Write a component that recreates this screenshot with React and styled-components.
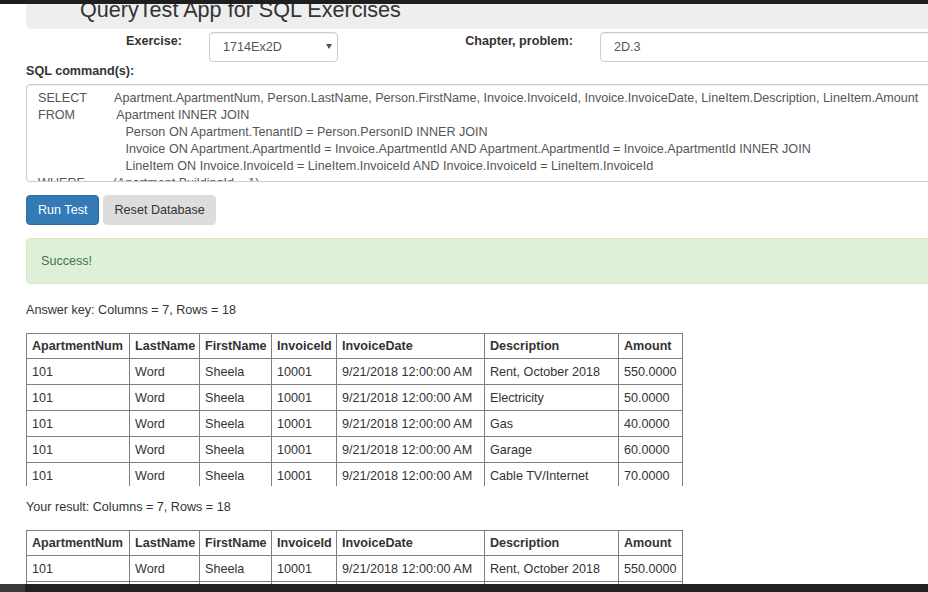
import React from 'react'
import styled, { createGlobalStyle } from 'styled-components'

const GlobalStyle = createGlobalStyle`
html, body {
    margin: 0;
    overflow: hidden;
    background: #fff;
}
body {
    font-family: "Liberation Sans", Arial, sans-serif;
    font-size: 12.6px;
    line-height: 18px;
    color: #333;
}
`

const TopBar = styled.div`
position: fixed;
top: 0;
left: 0;
right: 0;
height: 4px;
background: #1e1e1e;
z-index: 10;
`

const BottomBar = styled.div`
position: fixed;
bottom: 0;
left: 0;
right: 0;
height: 8px;
display: flex;
background: #222;
z-index: 10;
`

const BarCorner = styled.div`
width: 25px;
background: #3a3a3a;
`

const Page = styled.div`
width: 1150px;
padding-left: 26px;
`

const Jumbotron = styled.div`
height: 29px;
box-sizing: border-box;
display: flex;
align-items: flex-end;
padding: 0 0 7px 54px;
background: #eee;
border-radius: 6px;
`

const Title = styled.h3`
margin: 0;
font-size: 21.6px;
font-weight: normal;
line-height: 1.1;
color: #333;
`

const FormRow = styled.div`
display: flex;
align-items: flex-start;
margin-top: 3px;
`

const FieldLabel = styled.label`
width: ${p => p.$w}px;
flex: none;
margin-right: 27px;
text-align: right;
font-weight: bold;
line-height: 18px;
`

const SelectWrap = styled.div`
position: relative;
width: 129px;
flex: none;
`

const Select = styled.select`
width: 100%;
height: 30px;
box-sizing: border-box;
padding: 0 13px;
appearance: none;
border: 1px solid #ccc;
border-radius: 4px;
background: #fff;
font: inherit;
color: #555;
box-shadow: inset 0 1px 1px rgba(0, 0, 0, .075);
`

const Caret = styled.span`
position: absolute;
right: 6px;
top: 12px;
width: 0;
height: 0;
border-left: 3.5px solid transparent;
border-right: 3.5px solid transparent;
border-top: 5px solid #555;
pointer-events: none;
`

const TextInput = styled.input`
flex: 1;
height: 30px;
box-sizing: border-box;
padding: 0 13px;
border: 1px solid #ccc;
border-radius: 4px;
font: inherit;
color: #555;
box-shadow: inset 0 1px 1px rgba(0, 0, 0, .075);
`

const BlockLabel = styled.div`
font-weight: bold;
line-height: 18px;
`

const SqlBox = styled.textarea`
display: block;
width: 100%;
height: 98px;
box-sizing: border-box;
margin-top: 4px;
padding: 5px 11px;
border: 1px solid #ccc;
border-radius: 4px;
font: inherit;
line-height: 17px;
color: #555;
white-space: pre;
overflow: hidden;
resize: none;
box-shadow: inset 0 1px 1px rgba(0, 0, 0, .075);
`

const Buttons = styled.div`
display: flex;
gap: 4px;
margin-top: 13px;
`

const Button = styled.button`
height: 30px;
padding: 0 ${p => p.$primary ? 11 : 10}px;
border: 1px solid ${p => p.$primary ? '#2e6da4' : '#ddd'};
border-radius: 4px;
background: ${p => p.$primary ? '#337ab7' : '#ddd'};
color: ${p => p.$primary ? '#fff' : '#333'};
font: inherit;
cursor: pointer;
`

const Alert = styled.div`
margin-top: 13px;
padding: 13px 14px;
background: #dff0d8;
border: 1px solid #d6e9c6;
border-radius: 4px;
color: #3c763d;
`

const Caption = styled.div`
margin-top: ${p => p.$top}px;
`

const TableWrap = styled.div`
margin-top: 14px;
height: 153px;
overflow: hidden;
`

const Table = styled.table`
width: 656px;
table-layout: fixed;
border-collapse: collapse;
border: 1px solid #808080;
`

const Th = styled.th`
height: 24px;
padding: 0 5px;
border: 1px solid #808080;
text-align: left;
font-weight: bold;
white-space: nowrap;
`

const Td = styled.td`
height: 25px;
padding: 0 5px;
border: 1px solid #808080;
white-space: nowrap;
`

const columns = [
    ['ApartmentNum', 103],
    ['LastName', 70],
    ['FirstName', 72],
    ['InvoiceId', 65],
    ['InvoiceDate', 148],
    ['Description', 134],
    ['Amount', 64],
]

const rows = [
    ['Rent, October 2018', '550.0000'],
    ['Electricity', '50.0000'],
    ['Gas', '40.0000'],
    ['Garage', '60.0000'],
    ['Cable TV/Internet', '70.0000'],
]

const sql = [
    'SELECT        Apartment.ApartmentNum, Person.LastName, Person.FirstName, Invoice.InvoiceId, Invoice.InvoiceDate, LineItem.Description, LineItem.Amount',
    'FROM            Apartment INNER JOIN',
    '                         Person ON Apartment.TenantID = Person.PersonID INNER JOIN',
    '                         Invoice ON Apartment.ApartmentId = Invoice.ApartmentId AND Apartment.ApartmentId = Invoice.ApartmentId INNER JOIN',
    '                         LineItem ON Invoice.InvoiceId = LineItem.InvoiceId AND Invoice.InvoiceId = LineItem.InvoiceId',
    'WHERE        (Apartment.BuildingId = 1)',
].join('\n')

function ResultTable() {
    return (
        <TableWrap>
            <Table>
                <colgroup>
                    {columns.map(([name, w]) => <col key={name} style={{ width: w }} />)}
                </colgroup>
                <thead>
                    <tr>
                        {columns.map(([name]) => <Th key={name}>{name}</Th>)}
                    </tr>
                </thead>
                <tbody>
                    {rows.map(([desc, amount]) => (
                        <tr key={desc}>
                            <Td>101</Td>
                            <Td>Word</Td>
                            <Td>Sheela</Td>
                            <Td>10001</Td>
                            <Td>9/21/2018 12:00:00 AM</Td>
                            <Td>{desc}</Td>
                            <Td>{amount}</Td>
                        </tr>
                    ))}
                </tbody>
            </Table>
        </TableWrap>
    )
}

export default function App() {

    return (
        <>
            <GlobalStyle />
            <TopBar />
            <Page>
                <Jumbotron>
                    <Title>QueryTest App for SQL Exercises</Title>
                </Jumbotron>

                <FormRow>
                    <FieldLabel $w={156}>Exercise:</FieldLabel>
                    <SelectWrap>
                        <Select defaultValue='1714Ex2D'>
                            <option>1714Ex2D</option>
                        </Select>
                        <Caret />
                    </SelectWrap>
                    <FieldLabel $w={235}>Chapter, problem:</FieldLabel>
                    <TextInput defaultValue='2D.3' />
                </FormRow>

                <BlockLabel>SQL command(s):</BlockLabel>
                <SqlBox wrap='off' readOnly value={sql} />

                <Buttons>
                    <Button $primary>Run Test</Button>
                    <Button>Reset Database</Button>
                </Buttons>

                <Alert>Success!</Alert>

                <Caption $top={17}>Answer key: Columns = 7, Rows = 18</Caption>
                <ResultTable />

                <Caption $top={12}>Your result: Columns = 7, Rows = 18</Caption>
                <ResultTable />
            </Page>
            <BottomBar>
                <BarCorner />
            </BottomBar>
        </>
    )
}
